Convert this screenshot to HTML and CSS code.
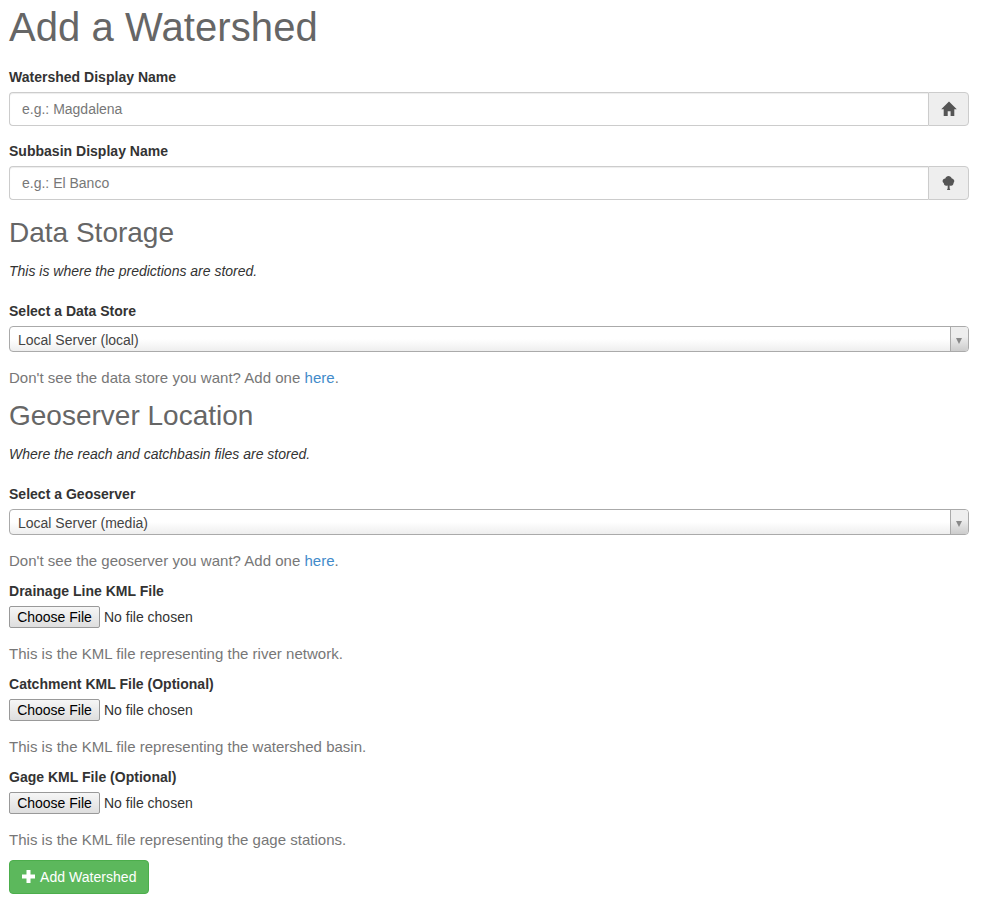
FILE: index.html
```html
<!DOCTYPE html>
<html lang="en">
<head>
<meta charset="utf-8">
<title>Add a Watershed</title>
<link rel="stylesheet" href="styles.css">
</head>
<body>
<main class="page">
  <h1>Add a Watershed</h1>
  <div class="group">
    <label for="watershed">Watershed Display Name</label>
    <div class="input-group">
      <input id="watershed" type="text" placeholder="e.g.: Magdalena">
      <span class="addon"><svg width="16" height="16" viewBox="0 0 16 16"><path d="M8 .4 .2 8.200h2.500V15h4v-4.800h2.900V15h3.700V8.200h2.500L8 .4z"/></svg></span>
    </div>
  </div>
  <div class="group">
    <label for="subbasin">Subbasin Display Name</label>
    <div class="input-group">
      <input id="subbasin" type="text" placeholder="e.g.: El Banco">
      <span class="addon"><svg width="16" height="16" viewBox="0 0 16 16"><path d="M7.500 1C6 1 4.700 2 4.300 3.400 2.800 3.500 1.600 4.600 1.600 6c0 .9.500 1.700 1.200 2.100-.1 1.600 1 2.700 2.500 2.700.5 0 1-.1 1.400-.4V13.300L6 15h3.300L8.600 13.300v-2.900c.4.300.9.4 1.400.4 1.500 0 2.600-1.200 2.500-2.700.5-.5.8-1.200.8-2 0-1.400-1-2.500-2.500-2.700C10.300 2 9 1 7.500 1z"/></svg></span>
    </div>
  </div>

  <h2>Data Storage</h2>
  <p class="intro">This is where the predictions are stored.</p>
  <label>Select a Data Store</label>
  <div class="select"><span class="chosen">Local Server (local)</span><span class="arrow"></span></div>
  <p class="help">Don't see the data store you want? Add one <a href="#">here</a>.</p>

  <h2 class="second">Geoserver Location</h2>
  <p class="intro">Where the reach and catchbasin files are stored.</p>
  <label>Select a Geoserver</label>
  <div class="select"><span class="chosen">Local Server (media)</span><span class="arrow"></span></div>
  <p class="help">Don't see the geoserver you want? Add one <a href="#">here</a>.</p>

  <div class="upload">
    <label>Drainage Line KML File</label>
    <div class="file"><button type="button">Choose File</button><span>No file chosen</span></div>
    <p class="help">This is the KML file representing the river network.</p>
  </div>
  <div class="upload">
    <label>Catchment KML File (Optional)</label>
    <div class="file"><button type="button">Choose File</button><span>No file chosen</span></div>
    <p class="help">This is the KML file representing the watershed basin.</p>
  </div>
  <div class="upload">
    <label>Gage KML File (Optional)</label>
    <div class="file"><button type="button">Choose File</button><span>No file chosen</span></div>
    <p class="help">This is the KML file representing the gage stations.</p>
  </div>

  <button class="submit" type="button"><svg width="14" height="14" viewBox="0 0 14 14"><path d="M4.500 0h4v4.500H13v4H8.500V13h-4V8.500H0v-4h4.500z"/></svg>Add Watershed</button>
</main>
</body>
</html>
```
FILE: styles.css
```css
* {
  box-sizing: border-box;
}

body {
  margin: 0;
  background: #fff;
  color: #333;
  font: 14px/20px "Liberation Sans", Arial, sans-serif;
}

.page {
  padding: 5px 16px 6px 9px;
}

h1,
h2 {
  margin: 0;
  color: #666;
  font-weight: 400;
}

h1 {
  margin-bottom: 18px;
  font-size: 40px;
  line-height: 44px;
  letter-spacing: .08px;
}

h2 {
  margin: 17px 0 13px;
  font-size: 28px;
  line-height: 31px;
}

h2.second {
  margin-top: 12px;
}

label {
  display: block;
  margin-bottom: 5px;
  font-weight: 700;
  letter-spacing: .015px;
}

.group {
  margin-bottom: 15px;
}

.input-group {
  display: flex;
  height: 34px;
}

.input-group input {
  flex: 1;
  min-width: 0;
  padding: 6px 12px;
  border: 1px solid #ccc;
  border-right: 0;
  border-radius: 4px 0 0 4px;
  box-shadow: inset 0 1px 1px rgba(0, 0, 0, .075);
  color: #555;
  font: inherit;
}

.input-group input::placeholder {
  color: #777;
}

.addon {
  display: flex;
  align-items: center;
  justify-content: center;
  width: 41px;
  border: 1px solid #ccc;
  border-radius: 0 4px 4px 0;
  background: #eee;
  fill: #555;
}

.intro {
  margin: 0 0 20px;
  font-style: italic;
}

.select {
  display: flex;
  height: 26px;
  border: 1px solid #aaa;
  border-radius: 4px;
  overflow: hidden;
  background: linear-gradient(#fff 50%, #eee);
}

.chosen {
  flex: 1;
  padding-left: 8px;
  color: #444;
  line-height: 26px;
}

.arrow {
  display: flex;
  align-items: center;
  justify-content: center;
  width: 18px;
  padding: 4px 1px 0 0;
  border-left: 1px solid #aaa;
  background: linear-gradient(#eee 40%, #ccc);
}

.arrow::before {
  content: "";
  border: 3.5px solid transparent;
  border-top: 6px solid #888;
  border-bottom: 0;
}

.help {
  margin: 16px 0 10px;
  color: #777;
  font-size: 15px;
  letter-spacing: .018px;
}

a {
  color: #428bca;
  text-decoration: none;
}

.file {
  display: flex;
  gap: 4px;
  height: 22px;
  line-height: 22px;
}

.file button {
  width: 91px;
  padding: 0;
  border: 1px solid #999;
  border-radius: 2px;
  background: linear-gradient(#f6f6f6, #dedede);
  color: #000;
  font: 14px/20px "Liberation Sans", Arial, sans-serif;
}

.submit {
  display: flex;
  align-items: center;
  width: 140px;
  height: 34px;
  padding: 0 12px;
  border: 1px solid #4cae4c;
  border-radius: 4px;
  background: #5cb85c;
  color: #fff;
  font: inherit;
  letter-spacing: .04px;
  white-space: nowrap;
}

.submit svg {
  flex: none;
  margin-right: 4px;
  fill: #fff;
}
```
